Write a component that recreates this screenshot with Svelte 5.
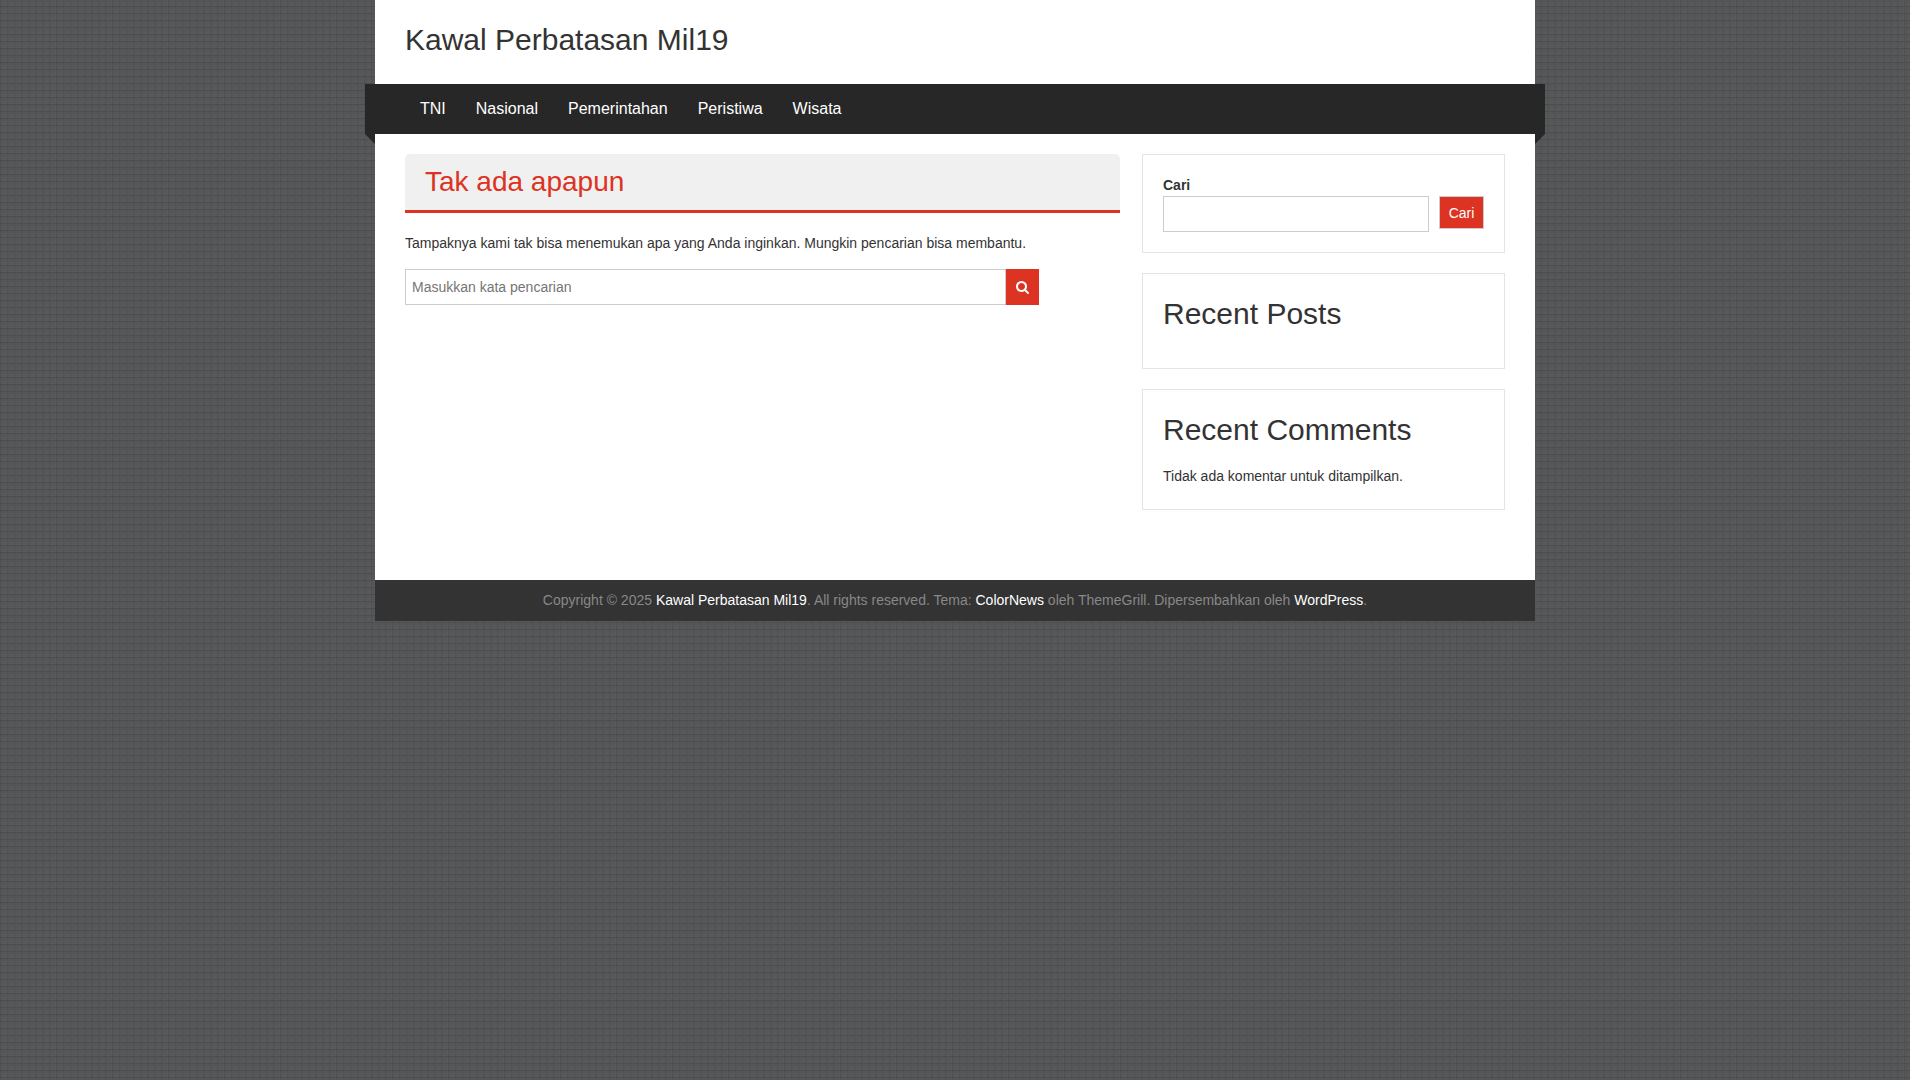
<script lang="ts">
  const siteName = 'Kawal Perbatasan Mil19'
  const menu = ['TNI', 'Nasional', 'Pemerintahan', 'Peristiwa', 'Wisata']

  let keyword = $state('')
  let widgetKeyword = $state('')

  function submitSearch(event: SubmitEvent): void {
    event.preventDefault()
  }
</script>

<div class="site">
  <div class="page">
    <header class="site-header">
      <h3 class="site-title"><a href="#home">{siteName}</a></h3>
    </header>

    <nav class="site-nav" aria-label="Menu utama">
      <ul>
        {#each menu as item}
          <li><a href={`#${item.toLowerCase()}`}>{item}</a></li>
        {/each}
      </ul>
    </nav>

    <div class="content">
      <main>
        <h1 class="page-title">Tak ada apapun</h1>
        <div class="page-content">
          <p>
            Tampaknya kami tak bisa menemukan apa yang Anda inginkan. Mungkin pencarian bisa membantu.
          </p>
          <form class="search-form" onsubmit={submitSearch}>
            <input
              type="text"
              aria-label="Masukkan kata pencarian"
              placeholder="Masukkan kata pencarian"
              bind:value={keyword}
            />
            <button type="submit" aria-label="Cari">
              <svg viewBox="0 0 1664 1664" aria-hidden="true">
                <path
                  d="M1152 704q0-185-131.500-316.500t-316.500-131.500-316.500 131.500-131.500 316.500 131.500 316.500 316.500 131.500 316.500-131.500 131.500-316.500zm512 832q0 52-38 90t-90 38q-54 0-90-38l-343-342q-179 124-399 124-143 0-273.500-55.500t-225-150-150-225-55.500-273.500 55.500-273.500 150-225 225-150 273.500-55.500 273.500 55.500 225 150 150 225 55.500 273.500q0 220-124 399l343 343q37 37 37 90z"
                />
              </svg>
            </button>
          </form>
        </div>
      </main>

      <aside>
        <section class="widget">
          <form class="widget-search" onsubmit={submitSearch}>
            <label for="widget-search">Cari</label>
            <div class="widget-search-row">
              <input id="widget-search" type="search" bind:value={widgetKeyword} />
              <button type="submit">Cari</button>
            </div>
          </form>
        </section>

        <section class="widget">
          <h2>Recent Posts</h2>
        </section>

        <section class="widget">
          <h2>Recent Comments</h2>
          <p>Tidak ada komentar untuk ditampilkan.</p>
        </section>
      </aside>
    </div>

    <footer>
      Copyright © 2025 <a href="#home">{siteName}</a>. All rights reserved. Tema:
      <a href="#colornews">ColorNews</a> oleh ThemeGrill. Dipersembahkan oleh
      <a href="#wordpress">WordPress</a>.
    </footer>
  </div>
</div>

<style>
  :global(body) {
    margin: 0;
    background: #fff;
  }

  .site {
    --accent: #dd3323;
    --text: #333;

    min-height: 100vh;
    margin-right: 10px;
    color: var(--text);
    font-family: 'Liberation Sans', Arial, sans-serif;
    font-size: 14px;
    line-height: 20px;
    text-rendering: optimizeSpeed;
    background-color: #58595b;
    background-image:
      linear-gradient(to bottom, transparent 6px, rgb(0 0 0 / 12%) 6px),
      linear-gradient(to right, rgb(0 0 0 / 5%) 1px, transparent 1px),
      linear-gradient(135deg, rgb(0 0 0 / 3%) 50%, transparent 50%);
    background-size: 7px 7px;
  }

  .site * {
    box-sizing: border-box;
  }

  .page {
    max-width: 1160px;
    margin: 0 auto;
    background: #fff;
  }

  h1,
  h2,
  h3,
  p,
  ul {
    margin: 0;
    padding: 0;
    font-weight: 400;
  }

  a {
    color: inherit;
    text-decoration: none;
  }

  .site-header {
    padding: 20px 30px 24px;
  }

  .site-title {
    font-size: 30px;
    line-height: 40px;
  }

  .site-nav {
    position: relative;
    margin: 0 -10px;
    padding: 0 40px;
    background: #272727;
  }

  /* folded ribbon ends */
  .site-nav::before,
  .site-nav::after {
    content: '';
    position: absolute;
    top: 100%;
    width: 10px;
    height: 10px;
    background: #272727;
  }

  .site-nav::before {
    left: 0;
    clip-path: polygon(0 0, 100% 0, 100% 100%);
  }

  .site-nav::after {
    right: 0;
    clip-path: polygon(0 0, 100% 0, 0 100%);
  }

  .site-nav ul {
    display: flex;
    flex-wrap: wrap;
    list-style: none;
  }

  .site-nav a {
    display: block;
    padding: 13px 15px;
    color: #fff;
    font-size: 16px;
    line-height: 24px;
  }

  .content {
    display: grid;
    grid-template-columns: 65% 33%;
    justify-content: space-between;
    padding: 20px 30px 50px;
  }

  .page-title {
    padding: 8px 20px;
    border-bottom: 3px solid var(--accent);
    border-radius: 5px 5px 0 0;
    background: #f0f0f0;
    color: var(--accent);
    font-size: 28px;
    line-height: 40px;
  }

  .page-content {
    max-width: 634px;
    padding-top: 20px;
  }

  .page-content p {
    margin-bottom: 16px;
  }

  .search-form {
    display: flex;
  }

  input {
    flex: 1;
    min-width: 0;
    height: 36px;
    padding: 0 6px;
    border: 1px solid #ccc;
    border-radius: 0;
    background: #fff;
    color: var(--text);
    font: inherit;
    text-rendering: inherit;
  }

  button {
    padding: 0;
    border: 0;
    background: var(--accent);
    color: #fff;
    font: inherit;
    cursor: pointer;
  }

  .search-form button {
    display: grid;
    place-items: center;
    width: 33px;
  }

  .search-form svg {
    width: 13px;
    height: 13px;
    fill: currentColor;
  }

  .widget {
    margin-bottom: 20px;
    padding: 20px;
    border: 1px solid #e4e4e4;
  }

  .widget label {
    display: block;
    padding-bottom: 1px;
    font-weight: 700;
  }

  .widget-search-row {
    display: flex;
    align-items: flex-start;
    gap: 10px;
  }

  .widget-search-row button {
    width: 45px;
    height: 33px;
    border: 1px solid #ccc;
  }

  .widget h2 {
    margin-bottom: 14px;
    font-size: 30px;
    line-height: 40px;
  }

  .widget p {
    padding: 2px 0 3px;
  }

  footer {
    padding: 10px 30px 11px;
    background: #333;
    color: #888;
    text-align: center;
  }

  footer a {
    color: #fff;
  }

  @media (max-width: 800px) {
    .content {
      grid-template-columns: 1fr;
      gap: 20px;
    }
  }
</style>
